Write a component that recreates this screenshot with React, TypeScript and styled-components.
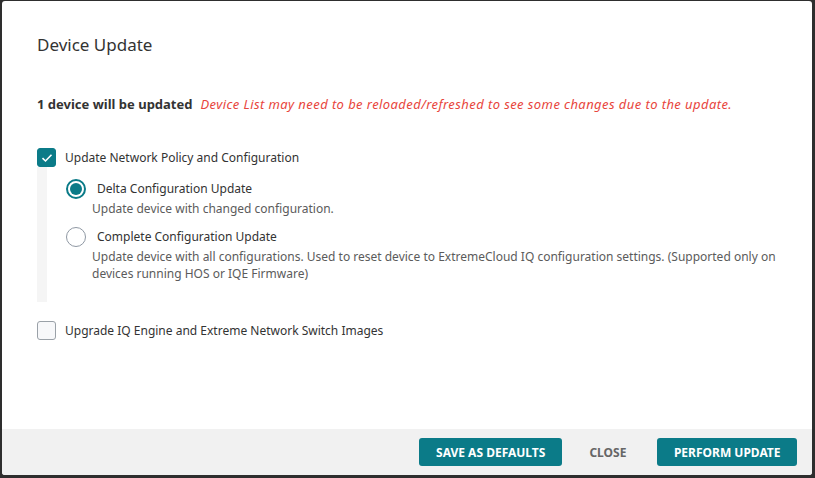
import styled, { createGlobalStyle } from "styled-components";

const GlobalStyle = createGlobalStyle`
  html, body {
    margin: 0;
    padding: 0;
    background: #2e2e2e;
  }
  body {
    font-family: "Noto Sans", "Open Sans", Arial, sans-serif;
    color: #333;
  }
`;

const teal = "#0b7b88";

const Dialog = styled.div`
  margin: 1px 3px 3px 2px;
  height: 474px;
  background: #fff;
  border-radius: 3px;
  display: flex;
  flex-direction: column;
  overflow: hidden;
`;

const Body = styled.div`
  flex: 1;
  padding: 32px 30px 0 35px;
`;

const Title = styled.h2`
  margin: 0;
  font-size: 17px;
  line-height: 24px;
  font-weight: 400;
  color: #333;
`;

const Notice = styled.div`
  margin-top: 38px;
  font-size: 13px;
  line-height: 18px;
`;

const Count = styled.strong`
  font-weight: 700;
  color: #333;
`;

const Warning = styled.em`
  color: #e8453c;
  margin-left: 8px;
  letter-spacing: 0.42px;
`;

const CheckRow = styled.label<{ top: number }>`
  display: flex;
  align-items: center;
  gap: 9px;
  margin-top: ${({ top }) => top}px;
  font-size: 12px;
  line-height: 19px;
  color: #333;
`;

const CheckBox = styled.span<{ checked?: boolean }>`
  width: 19px;
  height: 19px;
  box-sizing: border-box;
  border-radius: 3px;
  display: flex;
  align-items: center;
  justify-content: center;
  background: ${({ checked }) => (checked ? teal : "#f7f8fa")};
  border: 1px solid ${({ checked }) => (checked ? teal : "#9aa1a8")};
`;

const Group = styled.div`
  border-left: 10px solid #f5f5f5;
  padding: 12px 0 20px 19px;
`;

const RadioRow = styled.div<{ top: number }>`
  display: flex;
  align-items: center;
  gap: 11px;
  margin-top: ${({ top }) => top}px;
  font-size: 12px;
  line-height: 20px;
  color: #333;
`;

const Radio = styled.span<{ checked?: boolean }>`
  width: 20px;
  height: 20px;
  box-sizing: border-box;
  border-radius: 50%;
  border: ${({ checked }) => (checked ? `2px solid ${teal}` : "1px solid #8f98a3")};
  display: flex;
  align-items: center;
  justify-content: center;
  background: #fff;

  &::after {
    content: "";
    display: ${({ checked }) => (checked ? "block" : "none")};
    width: 12px;
    height: 12px;
    border-radius: 50%;
    background: ${teal};
  }
`;

const Description = styled.div`
  margin: 1px 0 0 26px;
  font-size: 12px;
  line-height: 17px;
  color: #5b5b5b;
`;

const Footer = styled.div`
  height: 46px;
  background: #f1f1f1;
  display: flex;
  align-items: center;
  justify-content: flex-end;
  gap: 11px;
  padding-right: 15px;
`;

const Button = styled.button<{ primary?: boolean; padX: string }>`
  font-family: "Noto Sans", "Open Sans", Arial, sans-serif;
  font-size: 12px;
  font-weight: 700;
  text-transform: uppercase;
  height: 28px;
  border: none;
  border-radius: 3px;
  padding: 0 ${({ padX }) => padX};
  background: ${({ primary }) => (primary ? teal : "transparent")};
  color: ${({ primary }) => (primary ? "#fff" : "#666")};
  cursor: pointer;
`;

function Check() {
  return (
    <svg width="12" height="10" viewBox="0 0 12 10">
      <path d="M1.5 5.2 L4.5 8 L10.5 1.8" fill="none" stroke="#fff" strokeWidth="1.6" />
    </svg>
  );
}

export default function App() {
  return (
    <>
      <GlobalStyle />
      <Dialog>
        <Body>
          <Title>Device Update</Title>
          <Notice>
            <Count>1 device will be updated</Count>
            <Warning>
              Device List may need to be reloaded/refreshed to see some changes due to the update.
            </Warning>
          </Notice>

          <CheckRow top={35}>
            <CheckBox checked>
              <Check />
            </CheckBox>
            Update Network Policy and Configuration
          </CheckRow>
          <Group>
            <RadioRow top={0}>
              <Radio checked />
              Delta Configuration Update
            </RadioRow>
            <Description>Update device with changed configuration.</Description>
            <RadioRow top={10}>
              <Radio />
              Complete Configuration Update
            </RadioRow>
            <Description>
              Update device with all configurations. Used to reset device to ExtremeCloud IQ
              configuration settings. (Supported only on devices running HOS or IQE Firmware)
            </Description>
          </Group>

          <CheckRow top={19}>
            <CheckBox />
            Upgrade IQ Engine and Extreme Network Switch Images
          </CheckRow>
        </Body>
        <Footer>
          <Button primary padX="17px">Save as Defaults</Button>
          <Button padX="20px 0 16px">Close</Button>
          <Button primary padX="16.5px">Perform Update</Button>
        </Footer>
      </Dialog>
    </>
  );
}
